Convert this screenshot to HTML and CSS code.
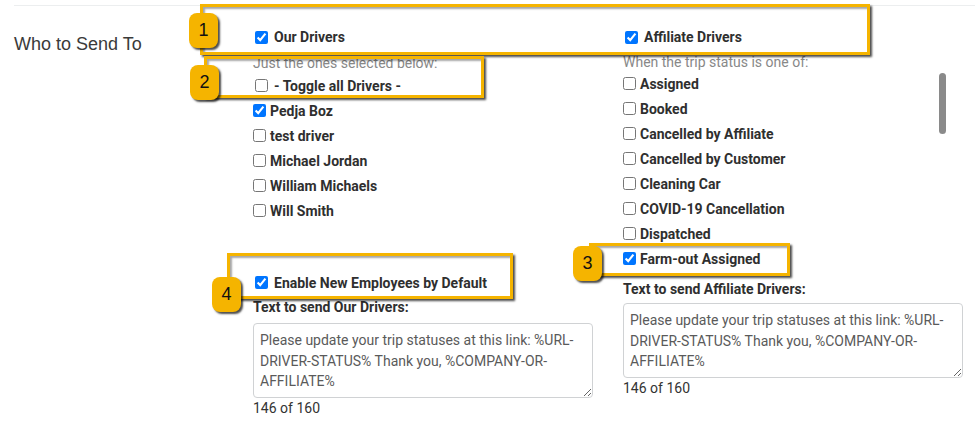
FILE: index.html
```html
<!DOCTYPE html>
<html lang="en">
<head>
<meta charset="utf-8">
<title>Who to Send To</title>
<link rel="stylesheet" href="styles.css">
</head>
<body>
<div class="page">
  <div class="section">
    <div class="section-label">Who to Send To</div>
    <div class="col col-left">
      <label class="head"><input type="checkbox" checked><span>Our Drivers</span></label>
      <div class="hint">Just the ones selected below:</div>
      <label class="opt opt-wide"><input type="checkbox"><span>- Toggle all Drivers -</span></label>
      <label class="opt"><input type="checkbox" checked><span>Pedja Boz</span></label>
      <label class="opt"><input type="checkbox"><span>test driver</span></label>
      <label class="opt"><input type="checkbox"><span>Michael Jordan</span></label>
      <label class="opt"><input type="checkbox"><span>William Michaels</span></label>
      <label class="opt"><input type="checkbox"><span>Will Smith</span></label>
      <label class="opt opt-wide enable"><input type="checkbox" checked><span>Enable New Employees by Default</span></label>
      <div class="field-label field-label-left">Text to send Our Drivers:</div>
      <textarea class="msg msg-left">Please update your trip statuses at this link: %URL-DRIVER-STATUS% Thank you, %COMPANY-OR-AFFILIATE%</textarea>
      <div class="count">146 of 160</div>
    </div>
    <div class="col col-right">
      <label class="head"><input type="checkbox" checked><span>Affiliate Drivers</span></label>
      <div class="hint hint-right">When the trip status is one of:</div>
      <label class="opt"><input type="checkbox"><span>Assigned</span></label>
      <label class="opt"><input type="checkbox"><span>Booked</span></label>
      <label class="opt"><input type="checkbox"><span>Cancelled by Affiliate</span></label>
      <label class="opt"><input type="checkbox"><span>Cancelled by Customer</span></label>
      <label class="opt"><input type="checkbox"><span>Cleaning Car</span></label>
      <label class="opt"><input type="checkbox"><span>COVID-19 Cancellation</span></label>
      <label class="opt"><input type="checkbox"><span>Dispatched</span></label>
      <label class="opt"><input type="checkbox" checked><span>Farm-out Assigned</span></label>
      <div class="field-label field-label-right">Text to send Affiliate Drivers:</div>
      <textarea class="msg msg-right">Please update your trip statuses at this link: %URL-DRIVER-STATUS% Thank you, %COMPANY-OR-AFFILIATE%</textarea>
      <div class="count">146 of 160</div>
    </div>
  </div>

  <div class="scroll-thumb"></div>

  <div class="hl hl-1"></div>
  <div class="hl hl-2"></div>
  <div class="hl hl-3"></div>
  <div class="hl hl-4"></div>
  <div class="badge badge-1">1</div>
  <div class="badge badge-2">2</div>
  <div class="badge badge-3">3</div>
  <div class="badge badge-4">4</div>
</div>
</body>
</html>
```

FILE: styles.css
```css
* { box-sizing: border-box; }

body {
  margin: 0;
  background: #fff;
  font-family: Roboto, "Liberation Sans", Arial, sans-serif;
  font-size: 14px;
  color: #333;
}

.page {
  position: relative;
  width: 975px;
  height: 432px;
  overflow: hidden;
  padding-top: 5px;
}

.section {
  margin-left: 14px;
  border-top: 1px solid #eceeef;
  display: flex;
  align-items: flex-start;
}

.section-label {
  width: 239px;
  margin-top: 26px;
  font-family: "Liberation Sans", Arial, sans-serif;
  font-size: 18px;
  line-height: 24px;
  color: #3a3a3a;
}

.col {
  padding-top: 21px;
  display: flex;
  flex-direction: column;
  align-items: flex-start;
}

.col-left { width: 370px; }
.col-right { width: 352px; }

.head {
  display: flex;
  align-items: center;
  height: 20px;
  font-weight: 700;
  color: #2f2f2f;
}

input[type="checkbox"] {
  width: 13px;
  height: 13px;
  flex: none;
}

.head input { margin: 0 6px 0 2px; }

.hint {
  margin-top: 6px;
  line-height: 20px;
  color: #888;
}

.hint-right { line-height: 18px; }

.opt {
  display: flex;
  align-items: center;
  height: 25px;
  font-weight: 700;
  color: #2f2f2f;
}

.opt input { margin: 0 4px 0 0; }
.opt-wide input { margin: 0 6px 0 2px; }

.enable { margin-top: 47px; }

.field-label {
  line-height: 20px;
  font-weight: 700;
  color: #2f2f2f;
}

.field-label-left { margin-top: 2px; }
.field-label-right { margin-top: 8px; }

.msg {
  display: block;
  width: 340px;
  height: 75px;
  margin: 6px 0 0 0;
  padding: 6px;
  border: 1px solid #d0d2d4;
  border-radius: 4px;
  font-family: Roboto, "Liberation Sans", Arial, sans-serif;
  font-size: 14px;
  line-height: 20.5px;
  color: #5a5a5a;
  background: #fff;
  overflow: hidden;
}

.msg-right { margin-top: 4px; }

.count {
  line-height: 20px;
  color: #333;
}

.scroll-thumb {
  position: absolute;
  left: 939px;
  top: 73px;
  width: 7px;
  height: 61px;
  border-radius: 4px;
  background: #8a8a8a;
}

/* annotation overlays */
.hl {
  position: absolute;
  border: 3px solid #f5b400;
  box-shadow: 2px 2px 2px rgba(0, 0, 0, 0.7), inset 2px 2px 2px rgba(0, 0, 0, 0.35);
  z-index: 2;
}

.hl-1 { left: 200px; top: 4px; width: 670px; height: 51px; }
.hl-2 { left: 204px; top: 56px; width: 280px; height: 42px; }
.hl-3 { left: 589px; top: 243px; width: 201px; height: 33px; }
.hl-4 { left: 227px; top: 253px; width: 286px; height: 46px; }

.badge {
  position: absolute;
  width: 29px;
  height: 35px;
  border-radius: 8px;
  background: #f5b400;
  box-shadow: 2px 2px 2px rgba(0, 0, 0, 0.7);
  display: flex;
  align-items: center;
  justify-content: center;
  font-family: "Liberation Sans", Arial, sans-serif;
  font-size: 18px;
  color: #111;
  z-index: 3;
}

.badge-1 { left: 189px; top: 13px; }
.badge-2 { left: 190px; top: 65px; }
.badge-3 { left: 573px; top: 246px; }
.badge-4 { left: 212px; top: 277px; }
```
